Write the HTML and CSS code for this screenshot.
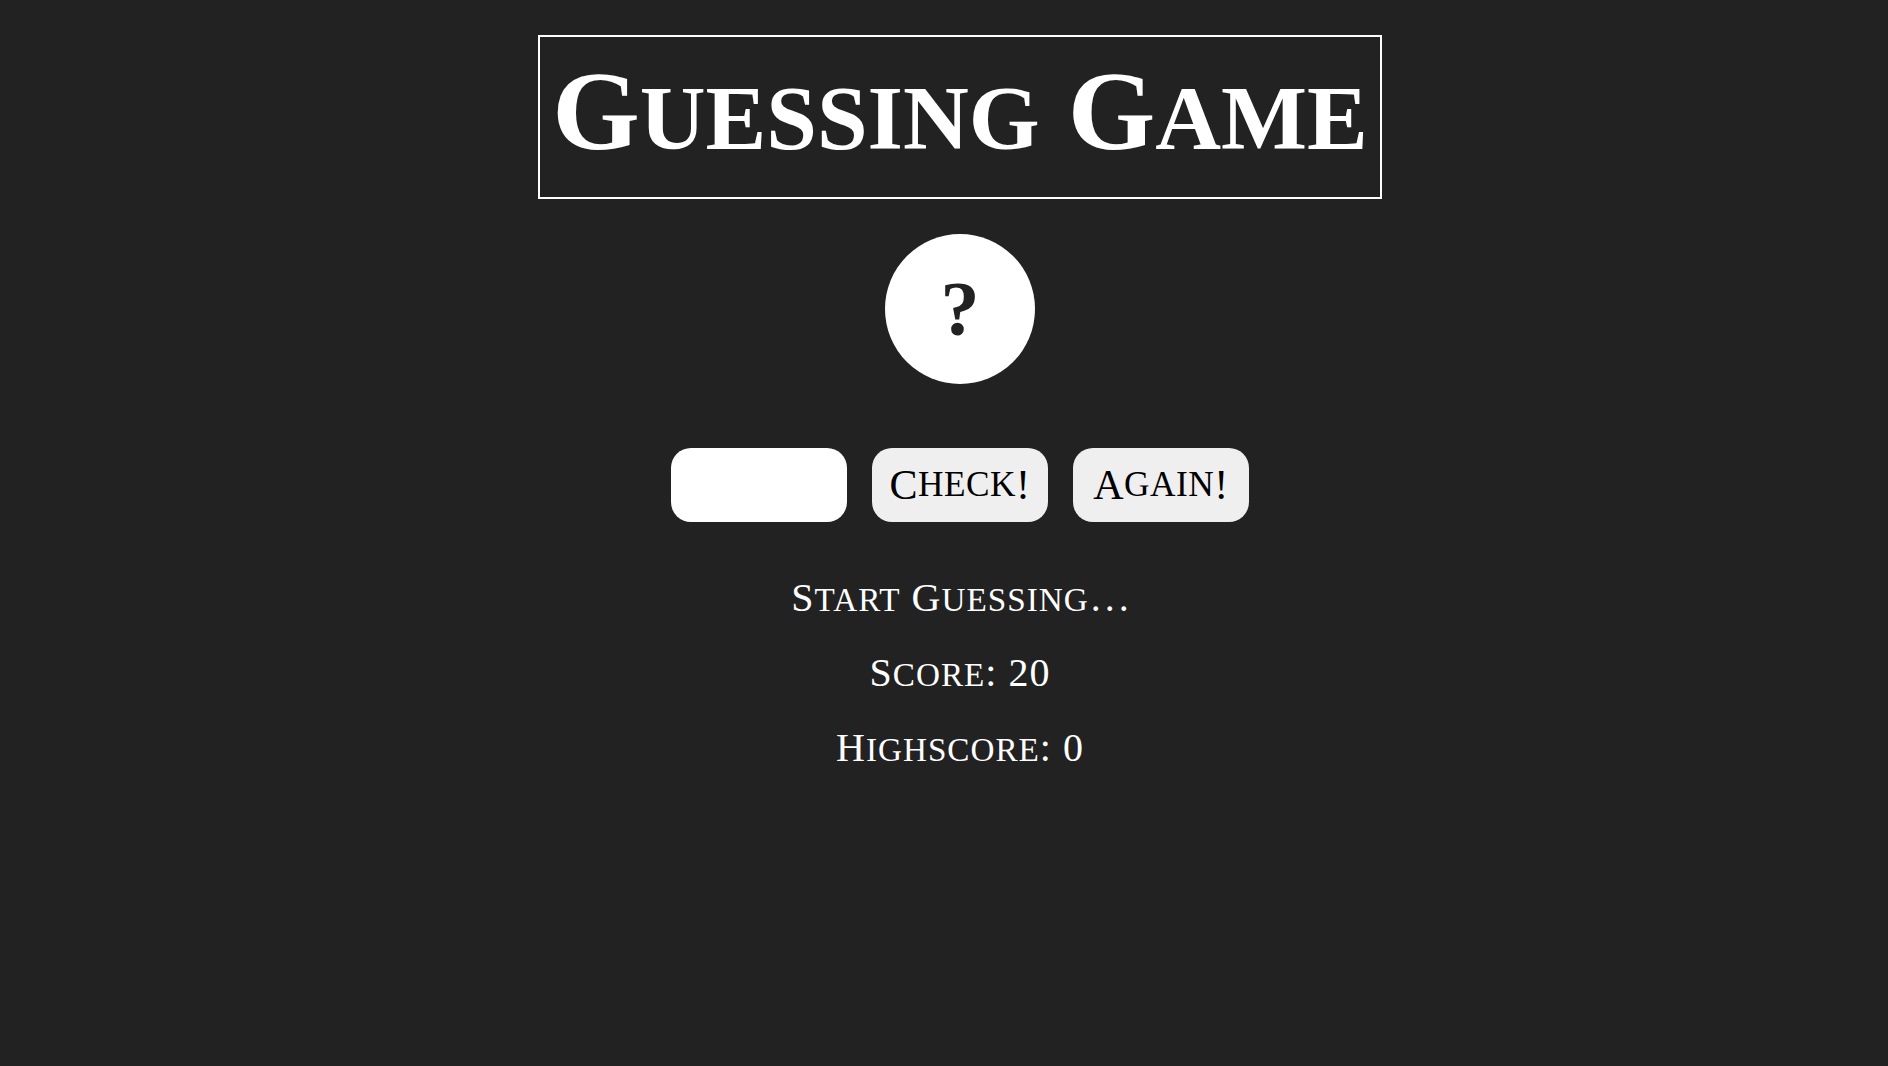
FILE: index.html
```html
<!DOCTYPE html>
<html lang="en">
<head>
<meta charset="utf-8">
<title>Guessing Game</title>
<link rel="stylesheet" href="styles.css">
</head>
<body>
<main class="game">
  <h1 class="title">G<span class="sc">uessing</span> G<span class="sc">ame</span></h1>
  <div class="number">?</div>
  <div class="controls">
    <input class="guess" type="number" aria-label="Your guess">
    <button class="btn" type="button">C<span class="sc">heck</span>!</button>
    <button class="btn" type="button">A<span class="sc">gain</span>!</button>
  </div>
  <div class="stats">
    <p class="line">S<span class="sc">tart</span> G<span class="sc">uessing</span><span class="dots">...</span></p>
    <p class="line">S<span class="sc">core</span>: 20</p>
    <p class="line">H<span class="sc">ighscore</span>: 0</p>
  </div>
</main>
</body>
</html>
```

FILE: styles.css
```css
html, body {
  margin: 0;
  padding: 0;
}

body {
  background: #222222;
  color: #ffffff;
  font-family: "Liberation Serif", "Times New Roman", serif;
  min-height: 100vh;
  padding-left: 32px;
  box-sizing: border-box;
}

.game {
  display: flex;
  flex-direction: column;
  align-items: center;
  padding-top: 35px;
}

.sc {
  font-size: 0.81em;
  line-height: 1;
  text-transform: uppercase;
}

.title {
  margin: 0;
  border: 2px solid #ffffff;
  padding: 12px 12px 24px;
  font-size: 112.5px;
  font-weight: 700;
  line-height: 124px;
  white-space: nowrap;
}

.number {
  margin-top: 35px;
  width: 150px;
  height: 150px;
  border-radius: 50%;
  background: #ffffff;
  color: #222222;
  display: flex;
  align-items: center;
  justify-content: center;
  font-size: 78px;
  font-weight: 700;
  line-height: 1;
}

.controls {
  margin-top: 64px;
  display: flex;
  gap: 25px;
}

.guess,
.btn {
  width: 176px;
  height: 74px;
  border: none;
  border-radius: 20px;
  box-sizing: border-box;
  font-family: "Liberation Serif", "Times New Roman", serif;
  font-size: 42px;
  padding: 0;
  margin: 0;
}

.guess {
  background: #ffffff;
  color: #222222;
  text-align: center;
  outline: none;
}

.btn {
  background: #efefef;
  color: #000000;
  display: flex;
  align-items: center;
  justify-content: center;
  cursor: pointer;
  letter-spacing: 0.5px;
}

.btn .sc {
  font-size: 0.84em;
}

.stats {
  margin-top: 53px;
  display: flex;
  flex-direction: column;
  align-items: center;
  gap: 29px;
}

.line {
  margin: 0;
  font-size: 40px;
  line-height: 46px;
  letter-spacing: 1px;
  white-space: nowrap;
}

.line .sc {
  font-size: 0.83em;
}

.dots {
  letter-spacing: 4px;
  margin-left: 2px;
  margin-right: -4px;
}
```
